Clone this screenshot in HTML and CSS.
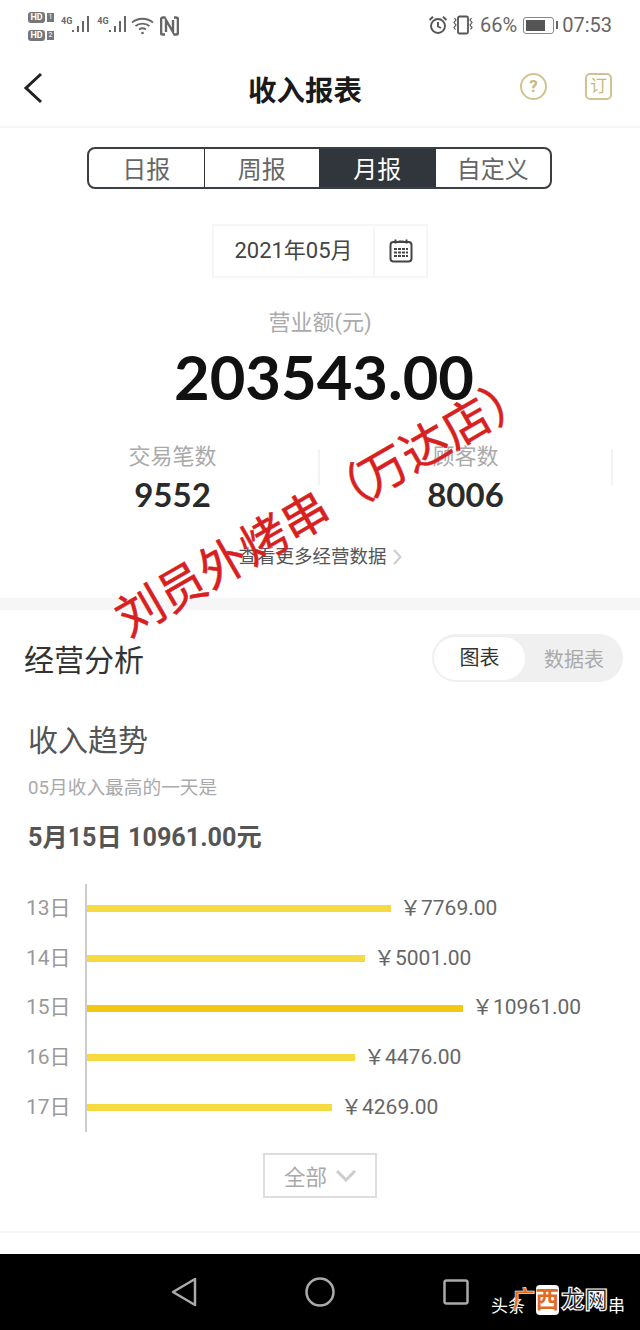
FILE: index.html
```html
<!DOCTYPE html>
<html lang="zh-CN">
<head>
    <meta charset="UTF-8">
    <meta name="viewport" content="width=device-width, initial-scale=1.0">
    <title>收入报表</title>
    <link rel="stylesheet" href="styles.css">
</head>
<body>
<div class="phone">
    <!-- Status bar -->
    <div class="status">
        <div class="status-left">
            <div class="hd-stack">
                <div class="hd-row"><span class="hd">HD</span><span class="sim">1</span></div>
                <div class="hd-row"><span class="hd">HD</span><span class="sim">2</span></div>
            </div>
            <div class="signal">
                <span class="net">4G</span>
                <svg width="20" height="18" viewBox="0 0 20 18"><path d="M1 15h2v2H1zM6 11h2v6H6zM11 6h2v11h-2zM16 1h2v16h-2z" fill="#666"/></svg>
            </div>
            <div class="signal signal-two">
                <span class="net">4G</span>
                <svg width="20" height="18" viewBox="0 0 20 18"><path d="M1 15h2v2H1zM6 11h2v6H6zM11 6h2v11h-2zM16 1h2v16h-2z" fill="#666"/></svg>
            </div>
            <svg class="wifi" width="23" height="18" viewBox="0 0 23 18" fill="none" stroke="#666" stroke-width="1.8"><path d="M1 5.500C7 0.500 16 0.500 22 5.500M4.500 9c4-3.200 10-3.200 14 0M8 12.500c2-1.400 5-1.400 7 0"/><circle cx="11.500" cy="16" r="1.300" fill="#666" stroke="none"/></svg>
            <svg class="nfc" width="19" height="20" viewBox="0 0 19 20" fill="none" stroke="#666"><path d="M5 1.500H3a2 2 0 0 0-2 2v13a2 2 0 0 0 2 2h2M14 1.500h2a2 2 0 0 1 2 2v13a2 2 0 0 1-2 2h-2" stroke-width="2.600"/><path d="M6 16V4l7 12V4" stroke-width="2.400"/></svg>
        </div>
        <div class="status-right">
            <svg width="20" height="20" viewBox="0 0 20 20" fill="none" stroke="#555" stroke-width="1.9"><circle cx="10" cy="11" r="7"/><path d="M10 7v4.500l3 1.500M1.500 5L5 1.800M18.500 5L15 1.800"/></svg>
            <svg class="vibrate" width="24" height="20" viewBox="0 0 24 20" fill="none" stroke="#555"><rect x="7" y="1.500" width="10" height="17" rx="1.500" stroke-width="1.800"/><path d="M3.500 3l1.500 2-2 2.500 2 2.500-2 2.500 1.500 2M20.500 3l-1.500 2 2 2.500-2 2.500 2 2.500-1.500 2" stroke-width="1.200"/></svg>
            <span class="status-text pct">66%</span>
            <div class="battery"><div class="battery-fill"></div></div>
            <span class="battery-tip"></span>
            <span class="status-text time">07:53</span>
        </div>
    </div>

    <!-- Title bar -->
    <header class="titlebar">
        <svg class="back" width="20" height="32" viewBox="0 0 20 32" fill="none" stroke="#222" stroke-width="3"><path d="M18 2L3 16l15 14"/></svg>
        <h1>收入报表</h1>
        <div class="title-icons">
            <span class="help">?</span>
            <span class="order">订</span>
        </div>
    </header>

    <!-- Period tabs -->
    <nav class="tabs">
        <a>日报</a>
        <a>周报</a>
        <a class="active">月报</a>
        <a>自定义</a>
    </nav>

    <div class="date-picker">
        <span class="date-text">2021年05月</span>
        <span class="date-btn">
            <svg width="24" height="24" viewBox="0 0 24 24" fill="none" stroke="#444" stroke-width="2"><rect x="1.500" y="3" width="21" height="19.500" rx="3"/><path d="M6.500 0.500v4M17.500 0.500v4M9.500 2.500h5"/><path d="M5 10h14M5 13.500h14M5 17h14" stroke-dasharray="3 1" stroke-width="2.200"/></svg>
        </span>
    </div>

    <!-- Revenue summary -->
    <section class="summary">
        <p class="summary-label">营业额(元)</p>
        <p class="summary-total">203543.00</p>
        <div class="stats">
            <div class="stat">
                <p class="stat-label">交易笔数</p>
                <p class="stat-value">9552</p>
            </div>
            <div class="stat">
                <p class="stat-label">顾客数</p>
                <p class="stat-value">8006</p>
            </div>
        </div>
        <a class="more">查看更多经营数据<svg width="9" height="16" viewBox="0 0 9 16" fill="none" stroke="#ccc" stroke-width="2"><path d="M1 1l6.500 7L1 15"/></svg></a>
    </section>

    <div class="band"></div>

    <!-- Analysis -->
    <section class="analysis">
        <div class="analysis-head">
            <h2>经营分析</h2>
            <div class="segment">
                <span class="segment-on">图表</span>
                <span class="segment-off">数据表</span>
            </div>
        </div>
        <h3>收入趋势</h3>
        <p class="peak-label">05月收入最高的一天是</p>
        <p class="peak-value">5月15日 10961.00元</p>

        <div class="chart">
            <div class="chart-row">
                <span class="day">13日</span>
                <div class="bar-cell"><div class="bar" style="width: 304px"></div><span class="amount">￥7769.00</span></div>
            </div>
            <div class="chart-row">
                <span class="day">14日</span>
                <div class="bar-cell"><div class="bar" style="width: 278px"></div><span class="amount">￥5001.00</span></div>
            </div>
            <div class="chart-row">
                <span class="day">15日</span>
                <div class="bar-cell"><div class="bar bar-max" style="width: 376px"></div><span class="amount">￥10961.00</span></div>
            </div>
            <div class="chart-row">
                <span class="day">16日</span>
                <div class="bar-cell"><div class="bar" style="width: 268px"></div><span class="amount">￥4476.00</span></div>
            </div>
            <div class="chart-row">
                <span class="day">17日</span>
                <div class="bar-cell"><div class="bar" style="width: 245px"></div><span class="amount">￥4269.00</span></div>
            </div>
        </div>

        <div class="all-wrap">
            <a class="all">全部<svg width="20" height="12" viewBox="0 0 20 12" fill="none" stroke="#ccc" stroke-width="3"><path d="M1 1l9 9 9-9"/></svg></a>
        </div>
    </section>

    <div class="bottom-line"></div>

    <!-- Android nav bar -->
    <footer class="navbar">
        <svg width="26" height="30" viewBox="0 0 26 30" fill="none" stroke="#aaa" stroke-width="2.500"><path d="M24 2v26L2 15z" stroke-linejoin="round"/></svg>
        <svg width="30" height="30" viewBox="0 0 30 30" fill="none" stroke="#aaa" stroke-width="2.500"><circle cx="15" cy="15" r="13.500"/></svg>
        <svg width="26" height="26" viewBox="0 0 26 26" fill="none" stroke="#aaa" stroke-width="2.500"><rect x="1.500" y="1.500" width="23" height="23" rx="2"/></svg>
    </footer>

    <!-- Overlays on the screenshot -->
    <div class="stamp">刘员外烤串<span class="stamp-paren">（</span>万达店）</div>
    <div class="credit credit-start">头条</div>
    <div class="credit credit-end">串</div>
    <div class="logo"><span class="logo-a">广</span><span class="logo-b">西</span><span class="logo-c">龙网</span></div>
</div>
</body>
</html>
```

FILE: styles.css
```css
/* Basic reset */
* {
    margin: 0;
    padding: 0;
    box-sizing: border-box;
}

body {
    background: #fff;
    font-family: "Roboto", "Noto Sans CJK SC", sans-serif;
}

.phone {
    position: relative;
    width: 640px;
    height: 1330px;
    overflow: hidden;
    background: #fff;
}

/* Status bar */
.status {
    height: 50px;
    padding: 8px 28px 0 28px;
    display: flex;
    justify-content: space-between;
    align-items: flex-start;
}

.status-left {
    display: flex;
    align-items: center;
    gap: 5px;
    height: 36px;
}

.hd-stack {
    display: flex;
    flex-direction: column;
    gap: 7px;
    margin-right: 2px;
}

.hd-row {
    display: flex;
    align-items: center;
    gap: 2px;
}

.hd {
    width: 17px;
    height: 11px;
    border-radius: 3px;
    background: #777;
    color: #fff;
    font-size: 9px;
    font-weight: 700;
    line-height: 11px;
    text-align: center;
}

.sim {
    width: 7px;
    height: 9px;
    background: #777;
    color: #fff;
    font-size: 7px;
    line-height: 9px;
    text-align: center;
}

.signal {
    display: flex;
    align-items: flex-start;
    margin-top: -4px;
}

.signal-two {
    margin-left: 1px;
}

.net {
    font-size: 9px;
    font-weight: 700;
    color: #666;
    line-height: 12px;
    margin-right: -1px;
}

.wifi {
    margin-left: -2px;
    margin-top: -1px;
}

.nfc {
    margin-left: 1px;
    margin-top: -1px;
}

.status-right {
    display: flex;
    align-items: center;
    height: 20px;
    margin-top: 7px;
    color: #666;
}

.vibrate {
    margin-left: 3px;
}

.status-text {
    font-size: 20px;
    line-height: 20px;
    color: #666;
}

.pct {
    margin-left: 5px;
}

.time {
    margin-left: 4px;
}

.battery {
    width: 31px;
    height: 17px;
    margin-left: 6px;
    border: 1px solid #888;
    border-radius: 3px;
    padding: 2px;
}

.battery-fill {
    width: 19px;
    height: 100%;
    background: #555;
}

.battery-tip {
    width: 2px;
    height: 8px;
    margin-left: 2px;
    background: #666;
}

/* Title bar */
.titlebar {
    height: 78px;
    padding: 0 41px 0 23px;
    display: flex;
    align-items: center;
    border-bottom: 2px solid #f4f4f4;
}

.back {
    flex-shrink: 0;
}

.titlebar h1 {
    margin-left: 205px;
    font-size: 28.500px;
    font-weight: 700;
    color: #1a1a1a;
    white-space: nowrap;
}

.title-icons {
    margin-left: auto;
    display: flex;
    align-items: center;
    gap: 38px;
    margin-right: -13px;
    margin-top: -4px;
}

.help {
    width: 27px;
    height: 27px;
    border: 2px solid #cfc491;
    border-radius: 50%;
    color: #c6b97a;
    font-size: 17px;
    font-weight: 700;
    line-height: 23px;
    text-align: center;
}

.order {
    width: 27px;
    height: 27px;
    border: 2px solid #cfc491;
    border-radius: 5px;
    color: #c6b97a;
    font-size: 17px;
    line-height: 22px;
    text-align: center;
}

/* Period tabs */
.tabs {
    width: 465px;
    height: 42px;
    margin: 19px 0 0 87px;
    display: flex;
    border: 2px solid #3a3f44;
    border-radius: 8px;
    overflow: hidden;
}

.tabs a {
    flex: 1;
    font-size: 24px;
    line-height: 42px;
    text-align: center;
    color: #666;
    border-right: 1px solid #333;
}

.tabs a:last-child {
    border-right: none;
}

.tabs a.active {
    background: #30363c;
    color: #fff;
}

/* Month picker */
.date-picker {
    width: 216px;
    height: 54px;
    margin: 35px 0 0 212px;
    display: flex;
    border: 2px solid #f6f6f6;
}

.date-text {
    width: 161px;
    font-size: 22px;
    line-height: 50px;
    text-align: center;
    color: #444;
    border-right: 2px solid #f6f6f6;
}

.date-btn {
    flex: 1;
    display: flex;
    align-items: center;
    justify-content: center;
}

/* Revenue summary */
.summary {
    height: 320px;
    text-align: center;
}

.summary-label {
    margin-top: 30px;
    font-size: 22px;
    line-height: 30px;
    color: #aaa;
}

.summary-total {
    margin-top: 4px;
    padding-left: 8px;
    font-family: "Lato", sans-serif;
    font-size: 61.500px;
    font-weight: 700;
    line-height: 68px;
    color: #111;
}

.stats {
    display: flex;
    margin-top: 33px;
    padding: 0 28px 0 26px;
}

.stat {
    flex: 1;
    position: relative;
}

.stat::after {
    content: "";
    position: absolute;
    right: -1px;
    top: 6px;
    width: 2px;
    height: 36px;
    background: #f3f3f3;
}

.stat-label {
    font-size: 22px;
    line-height: 28px;
    color: #aaa;
}

.stat-value {
    font-family: "Lato", sans-serif;
    font-size: 33px;
    font-weight: 700;
    line-height: 46px;
    color: #2a2a2a;
}

.more {
    display: flex;
    align-items: center;
    justify-content: center;
    gap: 6px;
    margin-top: 26px;
    font-size: 18.500px;
    line-height: 28px;
    color: #555;
}

.band {
    height: 12px;
    margin-top: -30px;
    background: #f6f6f6;
}

/* Analysis section */
.analysis {
    padding: 0 17px 0 24px;
}

.analysis-head {
    height: 92px;
    display: flex;
    justify-content: space-between;
    align-items: center;
    padding-top: 4px;
}

.analysis-head h2 {
    font-size: 30px;
    font-weight: 400;
    color: #333;
}

.segment {
    width: 191px;
    height: 48px;
    display: flex;
    align-items: center;
    padding: 0 19px 0 2px;
    background: #f0f0f0;
    border-radius: 24px;
    font-size: 20px;
}

.segment-on {
    width: 91px;
    height: 43px;
    background: #fff;
    border-radius: 22px;
    color: #333;
    line-height: 43px;
    text-align: center;
}

.segment-off {
    margin-left: auto;
    color: #aaa;
}

.analysis h3 {
    margin: 18px 0 0 4px;
    font-size: 30px;
    font-weight: 400;
    line-height: 42px;
    color: #555;
}

.peak-label {
    margin: 13px 0 0 4px;
    font-size: 18.700px;
    line-height: 26px;
    color: #aaa;
}

.peak-value {
    margin: 20px 0 0 4px;
    font-size: 25.200px;
    font-weight: 700;
    line-height: 34px;
    color: #555;
}

/* Bar chart */
.chart {
    margin-top: 29px;
}

.chart-row {
    height: 49.700px;
    display: flex;
    align-items: center;
}

.day {
    width: 62px;
    margin-left: 2px;
    margin-bottom: 6px;
    flex-shrink: 0;
    font-size: 21px;
    color: #999;
}

.bar-cell {
    height: 100%;
    flex: 1;
    margin-left: -3px;
    display: flex;
    align-items: center;
    gap: 9px;
    border-left: 2px solid #ccc;
}

.bar {
    height: 7px;
    background: #f6da42;
}

.bar-max {
    background: #f2c811;
}

.amount {
    margin-bottom: 6px;
    font-size: 21px;
    color: #666;
    white-space: nowrap;
}

.all-wrap {
    margin-top: 21px;
    padding-left: 239px;
}

.all {
    width: 114px;
    height: 45px;
    display: flex;
    align-items: center;
    gap: 9px;
    padding-left: 19px;
    border: 2px solid #ddd;
    font-size: 21.500px;
    color: #aaa;
}

.bottom-line {
    height: 2px;
    margin-top: 33px;
    background: #f6f6f6;
}

/* Navigation bar */
.navbar {
    position: absolute;
    left: 0;
    right: 0;
    bottom: 0;
    height: 76px;
    background: #000;
    display: flex;
    align-items: center;
    padding: 0 171px;
    justify-content: space-between;
}

/* Red stamp written over the screenshot */
.stamp {
    position: absolute;
    left: 89px;
    top: 478px;
    font-size: 47.500px;
    line-height: 56px;
    color: #d8201f;
    white-space: nowrap;
    transform: rotate(-30deg);
    -webkit-text-stroke: 0.5px #d8201f;
}

.stamp-paren {
    letter-spacing: -4px;
}

/* Site credit in the corner */
.credit {
    position: absolute;
    top: 1295px;
    font-size: 17px;
    line-height: 22px;
    color: #fff;
    white-space: nowrap;
}

.credit-start {
    left: 491px;
}

.credit-end {
    left: 608px;
}

.logo {
    position: absolute;
    left: 512px;
    top: 1285px;
    display: flex;
    font-size: 23.500px;
    line-height: 30px;
    font-weight: 700;
}

.logo-a {
    color: #e36a1f;
    -webkit-text-stroke: 0.5px #fff;
}

.logo-b {
    color: #e36a1f;
    background: #fff;
    border-radius: 4px;
}

.logo-c {
    margin-left: 2px;
    color: #222;
    -webkit-text-stroke: 1.2px #fff;
}
```
